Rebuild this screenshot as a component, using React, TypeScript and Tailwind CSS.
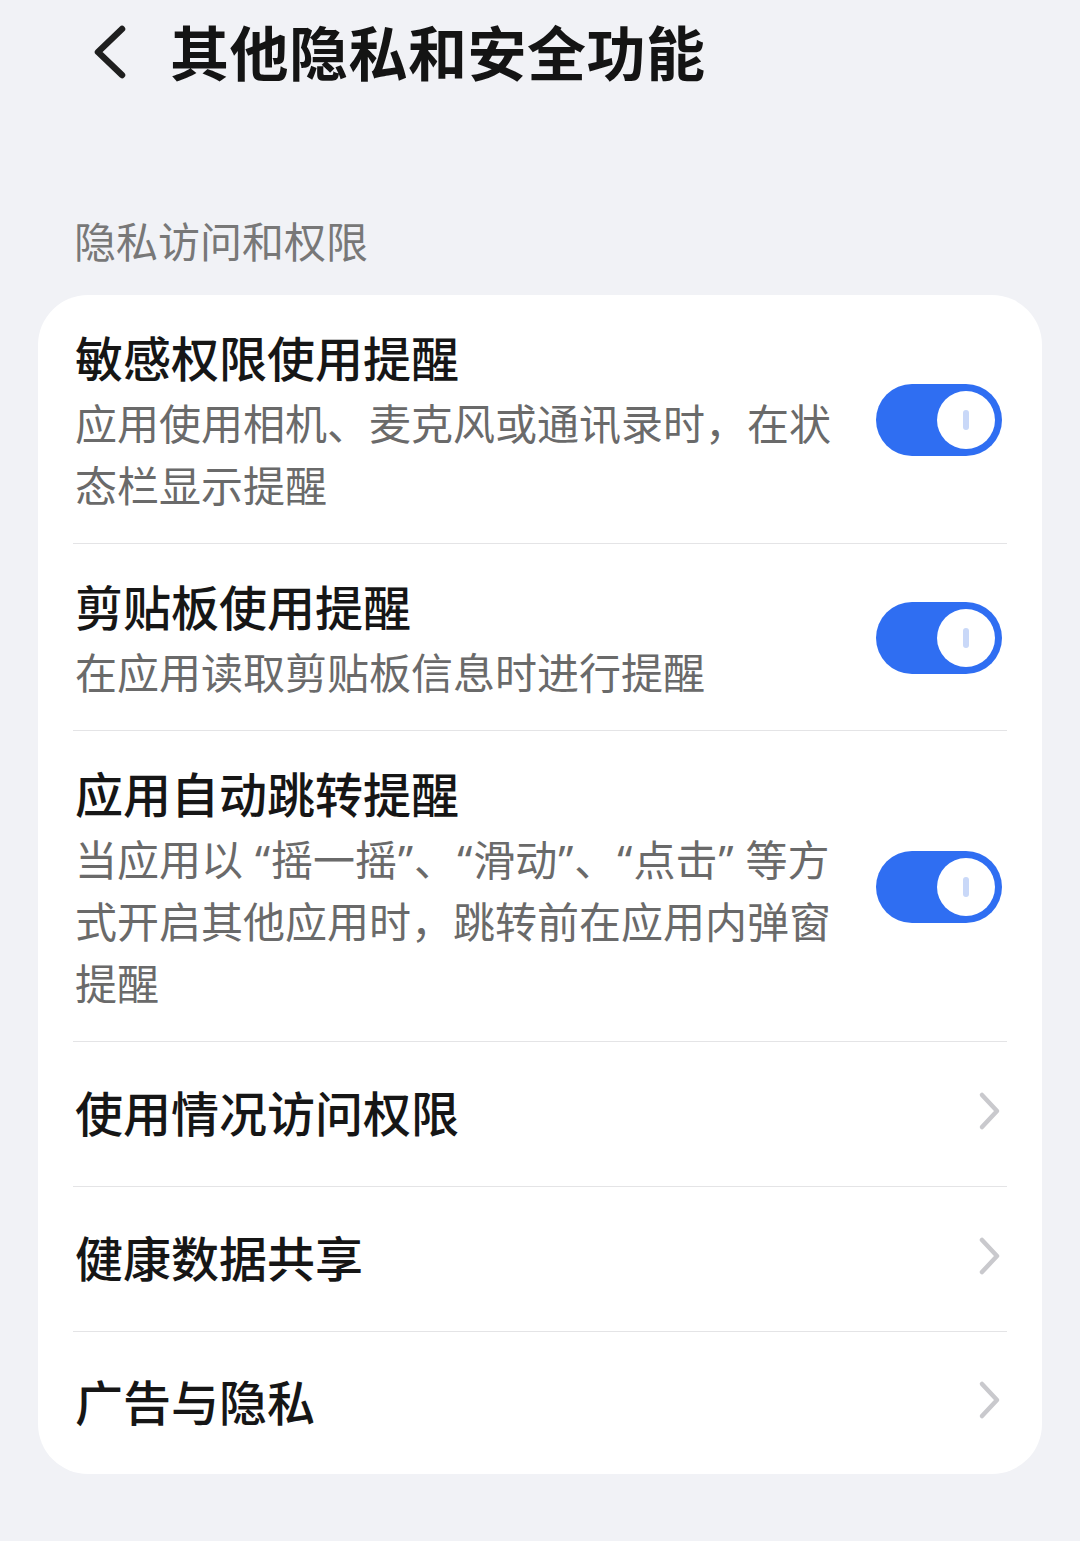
import React from 'react';

const FONT = '"Noto Sans CJK SC", "Noto Sans", sans-serif';

const Toggle: React.FC = () => (
  <div className="w-[126px] h-[72px] rounded-full bg-[#2f6ef2] flex items-center justify-end pr-[7px] shrink-0 mr-[5px]">
    <div className="w-[58px] h-[58px] rounded-full bg-white flex items-center justify-center">
      <div className="w-[6px] h-[20px] rounded-full bg-[#c9d8f8]" />
    </div>
  </div>
);

const Chevron: React.FC = () => (
  <svg width="26" height="40" viewBox="0 0 26 40" className="shrink-0 mr-[4px]">
    <path d="M5 4 L20 20 L5 36" fill="none" stroke="#c9c9cd" strokeWidth="4.5" strokeLinecap="round" strokeLinejoin="round" />
  </svg>
);

// latin quotes in a proportional face, like the phone renders them
const Q: React.FC<{ children: React.ReactNode }> = ({ children }) => (
  <span className="px-[1px] leading-[0]" style={{ fontFamily: '"Noto Sans", sans-serif' }}>{children}</span>
);

type ToggleRow = { title: string; lines: React.ReactNode[] };

const toggleRows: ToggleRow[] = [
  { title: '敏感权限使用提醒', lines: ['应用使用相机、麦克风或通讯录时，在状', '态栏显示提醒'] },
  { title: '剪贴板使用提醒', lines: ['在应用读取剪贴板信息时进行提醒'] },
  {
    title: '应用自动跳转提醒',
    lines: [
      <>当应用以<Q> “</Q>摇一摇<Q>”</Q>、<Q>“</Q>滑动<Q>”</Q>、<Q>“</Q>点击<Q>” </Q>等方</>,
      '式开启其他应用时，跳转前在应用内弹窗',
      '提醒',
    ],
  },
];

const navRows = ['使用情况访问权限', '健康数据共享', '广告与隐私'];

export default function App() {
  return (
    <div className="w-[1080px] h-[1541px] bg-[#f1f2f6] overflow-hidden" style={{ fontFamily: FONT }}>
      {/* Header */}
      <div className="h-[102px] flex items-center pl-[88px]">
        <svg width="44" height="56" viewBox="0 0 44 56" className="shrink-0">
          <path d="M34 6 L10 29 L34 52" fill="none" stroke="#1f1f1f" strokeWidth="6.5" strokeLinecap="round" strokeLinejoin="round" />
        </svg>
        <h1 className="ml-[38px] text-[59px] leading-[72px] font-bold text-[#141414] tracking-[0.5px]">其他隐私和安全功能</h1>
      </div>

      <div className="mt-[110px] pl-[74px] text-[42px] leading-[56px] text-[#787878]">隐私访问和权限</div>

      <div className="mt-[27px] mx-[38px] bg-white rounded-[50px] px-[35px]">
        {toggleRows.map((row, i) => (
          <div key={row.title} className={`flex items-center gap-[36px] pt-[29px] pb-[28px] ${i > 0 ? 'border-t border-[#e4e4e6]' : ''}`}>
            <div className="flex-1 min-w-0 pl-[2px]">
              <div className="text-[48px] leading-[64px] font-medium text-[#161616]">{row.title}</div>
              <div className="mt-[3px] text-[42px] leading-[62px] text-[#6a6a6a]">
                {row.lines.map((l, j) => (
                  <div key={j} className="whitespace-nowrap h-[62px]">{l}</div>
                ))}
              </div>
            </div>
            <Toggle />
          </div>
        ))}
        {navRows.map((t) => (
          <div key={t} className="h-[145px] last:h-[143px] flex items-center justify-between border-t border-[#e4e4e6] pl-[2px] pb-[7px]">
            <span className="text-[48px] leading-[64px] font-medium text-[#161616]">{t}</span>
            <Chevron />
          </div>
        ))}
      </div>
    </div>
  );
}
